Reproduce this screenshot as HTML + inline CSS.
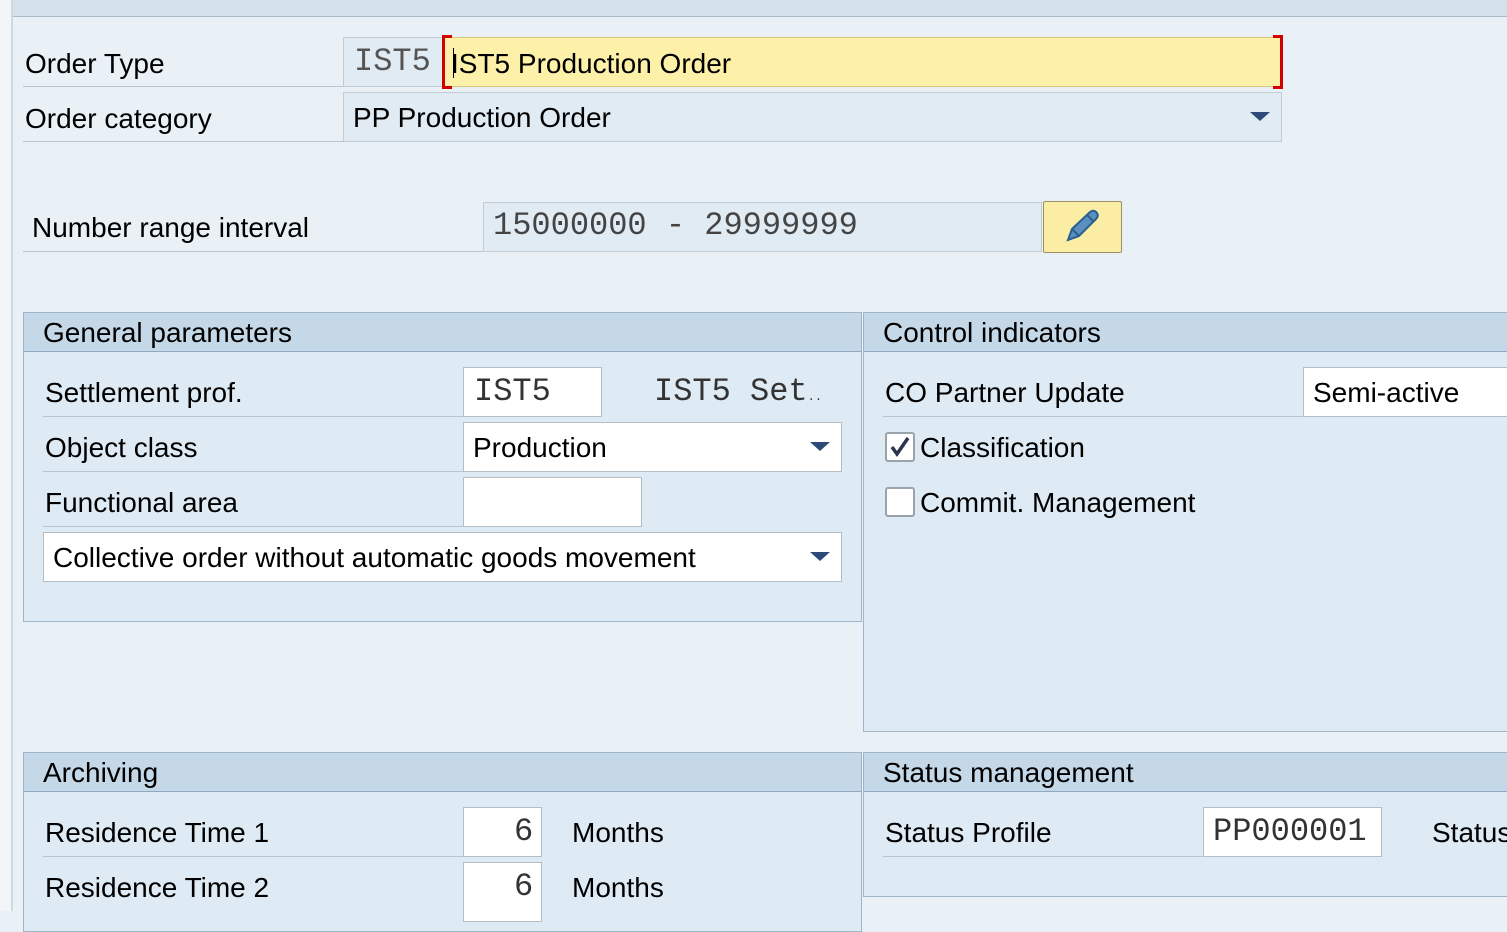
<!DOCTYPE html>
<html><head><meta charset="utf-8"><style>
*{margin:0;padding:0;box-sizing:border-box}
body{width:1507px;height:911px;overflow:hidden;background:#eaf1f6;position:relative;font-family:"Liberation Sans",sans-serif;color:#000}
.a{position:absolute}
.t{position:absolute;font-size:28px;line-height:32px;white-space:nowrap}
.m{position:absolute;font-family:"Liberation Mono",monospace;font-size:32px;line-height:32px;white-space:nowrap;color:#333}
.ln{position:absolute;height:1px;background:#b9c6d0}
.box{position:absolute;background:#fff;border:1px solid #b4bcc4}
.panel{position:absolute;background:#dfebf4;border:1px solid #9fb6c9}
.hdr{position:absolute;left:0;right:0;top:0;height:39px;background:#c4d8e8;border-bottom:1px solid #8fa9c0}
.dd{position:absolute;width:0;height:0;border-left:10px solid transparent;border-right:10px solid transparent;border-top:9px solid #2e4a78}
</style></head><body>
<div class="a" style="left:0;top:0;width:12px;height:911px;background:#f3f6f8"></div>
<div class="a" style="left:11px;top:0;width:2px;height:911px;background:#cfd9e0"></div>
<div class="a" style="left:13px;top:0;width:1494px;height:17px;background:#d5e1ea;border-bottom:1px solid #a9bac7"></div>

<div class="t" style="left:25px;top:48px">Order Type</div>
<div class="ln" style="left:23px;top:86px;width:320px"></div>
<div class="a" style="left:343px;top:37px;width:100px;height:50px;background:#e0ebf4;border:1px solid #c4ccd3"></div>
<div class="m" style="left:354px;top:46px;color:#555">IST5</div>
<div class="a" style="left:443px;top:37px;width:840px;height:50px;background:#fdf0a8;border:1px solid #d9c67a"></div>
<div class="a" style="left:442px;top:35px;width:10px;height:54px;border:3px solid #d40000;border-right:none;border-top-width:3px"></div>
<div class="a" style="left:1273px;top:35px;width:10px;height:54px;border:3px solid #d40000;border-left:none"></div>
<div class="a" style="left:453px;top:48px;width:1px;height:30px;background:#000"></div>
<div class="t" style="left:451px;top:48px">IST5 Production Order</div>

<div class="t" style="left:25px;top:103px">Order category</div>
<div class="ln" style="left:23px;top:141px;width:320px"></div>
<div class="a" style="left:343px;top:92px;width:939px;height:50px;background:#e0ebf4;border:1px solid #c4ccd3"></div>
<div class="t" style="left:353px;top:102px">PP Production Order</div>
<div class="dd" style="left:1250px;top:112px"></div>

<div class="t" style="left:32px;top:212px">Number range interval</div>
<div class="ln" style="left:23px;top:251px;width:460px"></div>
<div class="a" style="left:483px;top:202px;width:559px;height:50px;background:#e0ebf4;border:1px solid #c4ccd3"></div>
<div class="m" style="left:493px;top:210px;color:#444">15000000 - 29999999</div>
<div class="a" style="left:1043px;top:201px;width:79px;height:52px;background:#fbeea4;border:1px solid #9a9068;border-radius:2px"></div>
<svg class="a" style="left:1062px;top:207px" width="40" height="40" viewBox="0 0 40 40"><path d="M6 33 L10 22 L28 5 Q32 2 35 6 Q37 9 34 12 L17 29 Z" fill="#5b8fbf" stroke="#2b5f8f" stroke-width="2"/><path d="M10 22 L17 29" stroke="#2b5f8f" stroke-width="2"/><path d="M25 8 L32 15" stroke="#2b5f8f" stroke-width="2"/></svg>

<div class="panel" style="left:23px;top:312px;width:839px;height:310px"><div class="hdr"></div></div>
<div class="t" style="left:43px;top:317px">General parameters</div>
<div class="t" style="left:45px;top:377px">Settlement prof.</div>
<div class="ln" style="left:43px;top:416px;width:420px"></div>
<div class="box" style="left:463px;top:367px;width:139px;height:50px"></div>
<div class="m" style="left:474px;top:376px">IST5</div>
<div class="m" style="left:654px;top:376px">IST5 Set<span style="font-size:12px">..</span></div>
<div class="t" style="left:45px;top:432px">Object class</div>
<div class="ln" style="left:43px;top:471px;width:420px"></div>
<div class="box" style="left:463px;top:422px;width:379px;height:50px"></div>
<div class="t" style="left:473px;top:432px">Production</div>
<div class="dd" style="left:810px;top:442px"></div>
<div class="t" style="left:45px;top:487px">Functional area</div>
<div class="ln" style="left:43px;top:526px;width:420px"></div>
<div class="box" style="left:463px;top:477px;width:179px;height:50px"></div>
<div class="box" style="left:43px;top:532px;width:799px;height:50px"></div>
<div class="t" style="left:53px;top:542px">Collective order without automatic goods movement</div>
<div class="dd" style="left:810px;top:552px"></div>

<div class="panel" style="left:863px;top:312px;width:660px;height:420px"><div class="hdr"></div></div>
<div class="t" style="left:883px;top:317px">Control indicators</div>
<div class="t" style="left:885px;top:377px">CO Partner Update</div>
<div class="ln" style="left:883px;top:416px;width:420px"></div>
<div class="box" style="left:1303px;top:367px;width:220px;height:50px"></div>
<div class="t" style="left:1313px;top:377px">Semi-active</div>
<div class="a" style="left:885px;top:432px;width:30px;height:30px;background:#fff;border:2px solid #9aa3ab;border-radius:3px"></div>
<svg class="a" style="left:888px;top:435px" width="24" height="24"><path d="M4 12 L9 19 L20 3" stroke="#2a3550" stroke-width="3.5" fill="none"/></svg>
<div class="t" style="left:920px;top:432px">Classification</div>
<div class="a" style="left:885px;top:487px;width:30px;height:30px;background:#fff;border:2px solid #9aa3ab;border-radius:3px"></div>
<div class="t" style="left:920px;top:487px">Commit. Management</div>

<div class="panel" style="left:23px;top:752px;width:839px;height:180px"><div class="hdr"></div></div>
<div class="t" style="left:43px;top:757px">Archiving</div>
<div class="t" style="left:45px;top:817px">Residence Time 1</div>
<div class="ln" style="left:43px;top:856px;width:420px"></div>
<div class="box" style="left:463px;top:807px;width:79px;height:50px"></div>
<div class="m" style="left:514px;top:816px">6</div>
<div class="t" style="left:572px;top:817px">Months</div>
<div class="t" style="left:45px;top:872px">Residence Time 2</div>
<div class="box" style="left:463px;top:862px;width:79px;height:60px"></div>
<div class="m" style="left:514px;top:871px">6</div>
<div class="t" style="left:572px;top:872px">Months</div>

<div class="panel" style="left:863px;top:752px;width:660px;height:145px"><div class="hdr"></div></div>
<div class="t" style="left:883px;top:757px">Status management</div>
<div class="t" style="left:885px;top:817px">Status Profile</div>
<div class="ln" style="left:883px;top:856px;width:320px"></div>
<div class="box" style="left:1203px;top:807px;width:179px;height:50px"></div>
<div class="m" style="left:1213px;top:816px">PP000001</div>
<div class="t" style="left:1432px;top:817px">Status</div>
</body></html>
